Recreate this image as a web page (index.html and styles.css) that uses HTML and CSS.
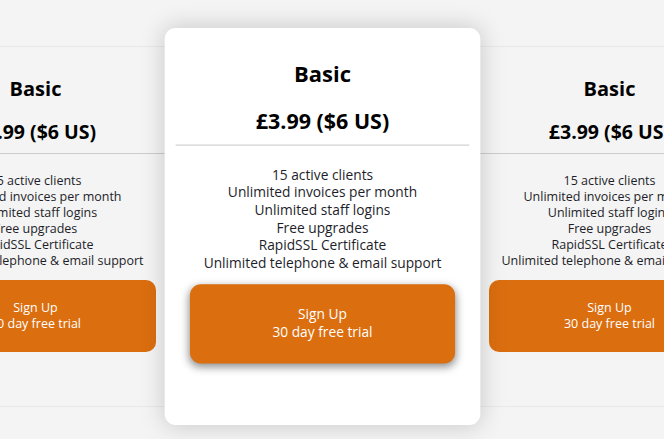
FILE: index.html
```html
<!DOCTYPE html>
<html lang="en">
<head>
    <meta charset="UTF-8">
    <meta name="viewport" content="width=device-width, initial-scale=1.0">
    <title>Pricing</title>
    <link rel="stylesheet" href="styles.css">
</head>
<body>

<div class="page">
    <div class="pricing">
        <div class="plan">
            <h2>Basic</h2>
            <div class="price">£3.99 ($6 US)</div>
            <hr>
            <ul class="features">
                <li>15 active clients</li>
                <li>Unlimited invoices per month</li>
                <li>Unlimited staff logins</li>
                <li>Free upgrades</li>
                <li>RapidSSL Certificate</li>
                <li>Unlimited telephone &amp; email support</li>
            </ul>
            <a class="signup" href="#">Sign Up<br>30 day free trial</a>
        </div>

        <div class="plan featured">
            <h2>Basic</h2>
            <div class="price">£3.99 ($6 US)</div>
            <hr>
            <ul class="features">
                <li>15 active clients</li>
                <li>Unlimited invoices per month</li>
                <li>Unlimited staff logins</li>
                <li>Free upgrades</li>
                <li>RapidSSL Certificate</li>
                <li>Unlimited telephone &amp; email support</li>
            </ul>
            <a class="signup" href="#">Sign Up<br>30 day free trial</a>
        </div>

        <div class="plan">
            <h2>Basic</h2>
            <div class="price">£3.99 ($6 US)</div>
            <hr>
            <ul class="features">
                <li>15 active clients</li>
                <li>Unlimited invoices per month</li>
                <li>Unlimited staff logins</li>
                <li>Free upgrades</li>
                <li>RapidSSL Certificate</li>
                <li>Unlimited telephone &amp; email support</li>
            </ul>
            <a class="signup" href="#">Sign Up<br>30 day free trial</a>
        </div>
    </div>
</div>

</body>
</html>
```

FILE: styles.css
```css
body {
    margin: 0;
    font-family: "Open Sans", "Noto Sans", sans-serif;
    background-color: #f4f4f4;
    color: #1e1e2a;
}

.page {
    height: 439px;
    overflow: hidden;
}

.pricing {
    display: flex;
    width: 861px;
    margin-left: -108px;
    padding-top: 46px;
}

.plan {
    box-sizing: border-box;
    flex-shrink: 0;
    width: 287px;
    height: 361px;
    border-top: 1px solid #e8e8e8;
    border-bottom: 1px solid #e8e8e8;
    background: #f4f4f4;
    text-align: center;
}

.plan.featured {
    position: relative;
    z-index: 1;
    border: none;
    border-radius: 10px;
    background: white;
    box-shadow: 0 0 22px rgba(0, 0, 0, 0.18);
    transform: scale(1.1);
}

h2 {
    margin: 27px 0 0;
    font-size: 20px;
    line-height: 29px;
    color: #000;
}

.price {
    margin-top: 17px;
    font-size: 19.5px;
    line-height: 24px;
    font-weight: bold;
    color: #000;
}

hr {
    margin: 9px 10px 0;
    border: none;
    border-top: 1px solid #ccc;
}

.features {
    list-style: none;
    margin: 19px 0 0;
    padding: 0;
    font-size: 12.5px;
    line-height: 16px;
}

.signup {
    display: block;
    margin: 11px 23px 0;
    padding: 20px 0;
    border-radius: 10px;
    background-color: #db6e0f;
    color: white;
    font-size: 12.5px;
    line-height: 16px;
    text-decoration: none;
}

.featured .signup {
    box-shadow: 0 3px 8px rgba(0, 0, 0, 0.45);
}
```
